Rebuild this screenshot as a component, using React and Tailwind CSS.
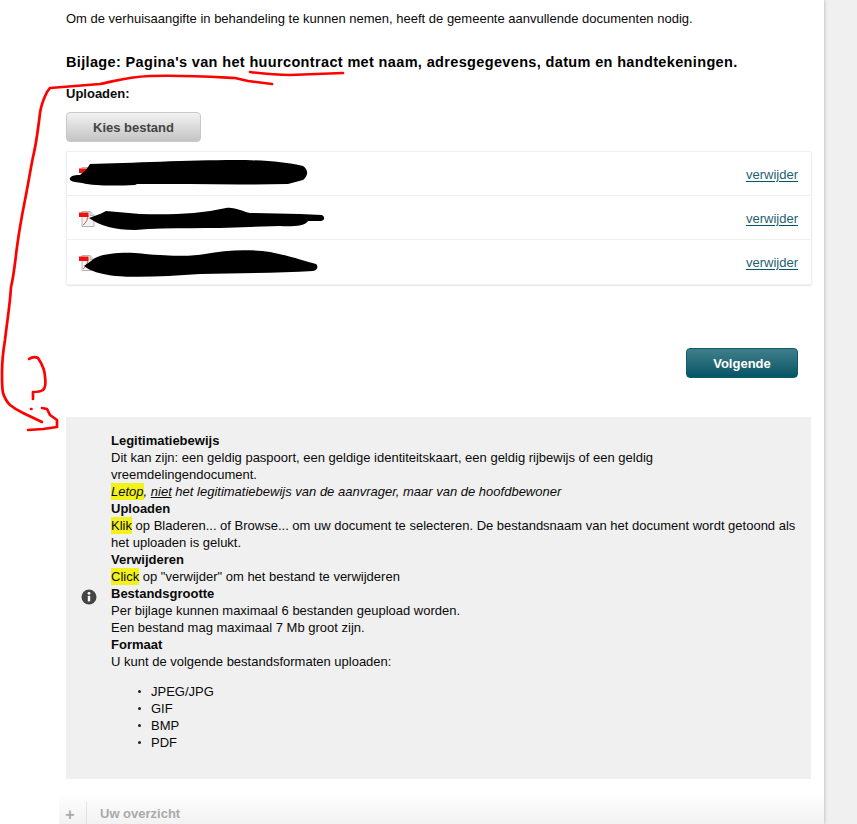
const Pdf = () => (
  <svg width="16" height="17" viewBox="0 0 16 17" className="shrink-0">
    <path d="M3 1.5h8l4 4v11H3z" fill="#f4f4f4" stroke="#b5b5b5" />
    <path d="M11 1.5v4h4" fill="#ddd" stroke="#b5b5b5" />
    <path d="M4 15c3-2 5-6 5-10" fill="none" stroke="#ee5555" />
    <rect x="0" y="2.5" width="9.5" height="4.5" fill="#ee1111" />
  </svg>
);

const rows = [
  "M70 178 C72 175 76 175 80 175 L86 170 L90 164 C130 163 190 160 235 160 C265 160 285 162 303 166 C309 170 308 176 303 180 L288 184 C240 185 190 184 137 184 L135 185 C115 186 95 186 82 183 L75 182 C71 181 69 180 70 178Z",
  "M89 218 L100 214 L106 211 L140 214 C170 215 200 214 226 208 C236 207 243 212 250 213 L300 214 L322 215 C325 217 325 220 321 221 L308 221 C306 226 290 227 280 226 L250 227 C210 229 170 227 135 230 C115 230 100 226 89 218Z",
  "M84 266 L95 258 C100 255 115 252 135 253 C165 256 190 257 205 254 C225 250 250 249 270 252 C290 256 305 261 316 264 C319 267 317 270 313 271 C280 273 240 273 200 274 C170 276 140 278 115 276 C100 274 90 271 84 266Z",
];

const Row = ({ last }) => (
  <div className={`flex h-11 items-center justify-between pl-3 pr-[13px] pt-px ${last ? "" : "border-b border-[#f0f0f0]"}`}>
    <Pdf />
    <a className="text-[#1f5f70] underline decoration-[#005566] underline-offset-2">verwijder</a>
  </div>
);

const Head = ({ children }) => <div className="font-bold">{children}</div>;
const Mark = ({ children }) => <span className="bg-[#f2f21a] py-px">{children}</span>;

export default function App() {
  return (
    <div className="relative flex h-[824px] w-[857px] overflow-hidden bg-[#f0f0f0] text-[13px] leading-[17px] text-[#0a0a0a] font-['Liberation_Sans',Arial,sans-serif]">
      <div className="flex w-[824px] shrink-0 flex-col bg-white shadow-[1px_0_3px_rgba(0,0,0,0.18)]">
        <div className="pl-[66px] pr-3">
          <p className="pt-[10px]">Om de verhuisaangifte in behandeling te kunnen nemen, heeft de gemeente aanvullende documenten nodig.</p>
          <h2 className="mt-[26px] text-[14.5px] font-bold leading-[18px] tracking-[0.35px] text-black">
            Bijlage: Pagina's van het huurcontract met naam, adresgegevens, datum en handtekeningen.
          </h2>
          <div className="mt-[14px] font-bold">Uploaden:</div>
          <button className="mt-[10px] block h-[30px] w-[135px] rounded-[4px] border border-[#c8c8c8] bg-gradient-to-b from-[#f2f2f2] to-[#c4c4c4] font-bold text-[#444]">
            Kies bestand
          </button>
          <div className="mt-[9px] rounded-[2px] border border-[#f0f0f0] shadow-[0_1px_2px_rgba(0,0,0,0.1)]">
            <Row />
            <Row />
            <Row last />
          </div>
          <div className="mt-[63px] flex justify-end pr-[14px]">
            <button className="h-[30px] w-28 rounded-[4px] border border-[#0f5d6c] bg-gradient-to-b from-[#3f7f8b] to-[#005566] font-bold text-white">
              Volgende
            </button>
          </div>
          <div className="relative mt-[39px] h-[362px] w-[745px] bg-[#f0f0f0] pl-[45px] pr-[14px] pt-[15px]">
            <svg width="16" height="16" viewBox="0 0 16 16" className="absolute left-[15px] top-[172px]">
              <circle cx="8" cy="8" r="7.5" fill="#444" />
              <circle cx="8" cy="4.3" r="1.4" fill="#fff" />
              <rect x="6.8" y="6.8" width="2.4" height="5.6" fill="#fff" />
            </svg>
            <Head>Legitimatiebewijs</Head>
            <div>Dit kan zijn: een geldig paspoort, een geldige identiteitskaart, een geldig rijbewijs of een geldig vreemdelingendocument.</div>
            <div className="italic"><Mark>Letop</Mark>, <span className="underline">niet</span> het legitimatiebewijs van de aanvrager, maar van de hoofdbewoner</div>
            <Head>Uploaden</Head>
            <div><Mark>Klik</Mark> op Bladeren... of Browse... om uw document te selecteren. De bestandsnaam van het document wordt getoond als het uploaden is gelukt.</div>
            <Head>Verwijderen</Head>
            <div><Mark>Click</Mark> op "verwijder" om het bestand te verwijderen</div>
            <Head>Bestandsgrootte</Head>
            <div>Per bijlage kunnen maximaal 6 bestanden geupload worden.</div>
            <div>Een bestand mag maximaal 7 Mb groot zijn.</div>
            <Head>Formaat</Head>
            <div>U kunt de volgende bestandsformaten uploaden:</div>
            <ul className="mt-[13px] list-none pl-[27px]">
              {["JPEG/JPG", "GIF", "BMP", "PDF"].map((f) => (
                <li key={f} className="flex items-center gap-[10px]">
                  <span className="size-[3px] rounded-full bg-[#222]" />
                  {f}
                </li>
              ))}
            </ul>
          </div>
        </div>
        <div className="ml-[59px] mt-[14px] flex flex-1 items-center bg-gradient-to-b from-white to-[#f1f1f1] pt-[9px]">
          <span className="w-[27px] pr-[5px] text-center text-[16px] font-bold text-[#aaa]">+</span>
          <span className="h-[24px] border-l border-[#e2e2e2] pl-[13px] pt-[3px] font-bold text-[#aaa]">Uw overzicht</span>
        </div>
      </div>

      <svg width="857" height="824" viewBox="0 0 857 824" className="pointer-events-none absolute left-0 top-0">
        {rows.map((d) => <path key={d} d={d} fill="#000" />)}
        <g fill="none" stroke="#ff0000" strokeWidth="2.7" strokeLinecap="round" strokeLinejoin="round">
          <path d="M272 84 L248 81 L235 78 C215 77 185 75 150 76 C125 77 112 82 100 84 L50 88 L47 92 C43 100 41 106 40 113 C38 130 36 145 33 157 C30 172 28 185 25 200 C22 215 19 232 17 247 C15 262 14 275 11 287 C10 305 7 322 5 340 C3 352 2 362 2 373 C2 382 2 388 3 393 C5 399 7 402 10 405 C15 409 19 411 23 413 L42 422" />
          <path d="M42 408 L47 409 L50 415 L57 420 L57 427 L43 429 L28 430" />
          <path d="M29 359 C32 357 36 357 38 358 C42 364 45 371 45 377 C46 383 45 388 43 390 C40 392 36 392 33 392 L33 399" />
          <path d="M31 409 L31.5 409" />
          <path d="M250 72 C265 74 280 75 290 75 L343 73" />
        </g>
      </svg>
    </div>
  );
}
